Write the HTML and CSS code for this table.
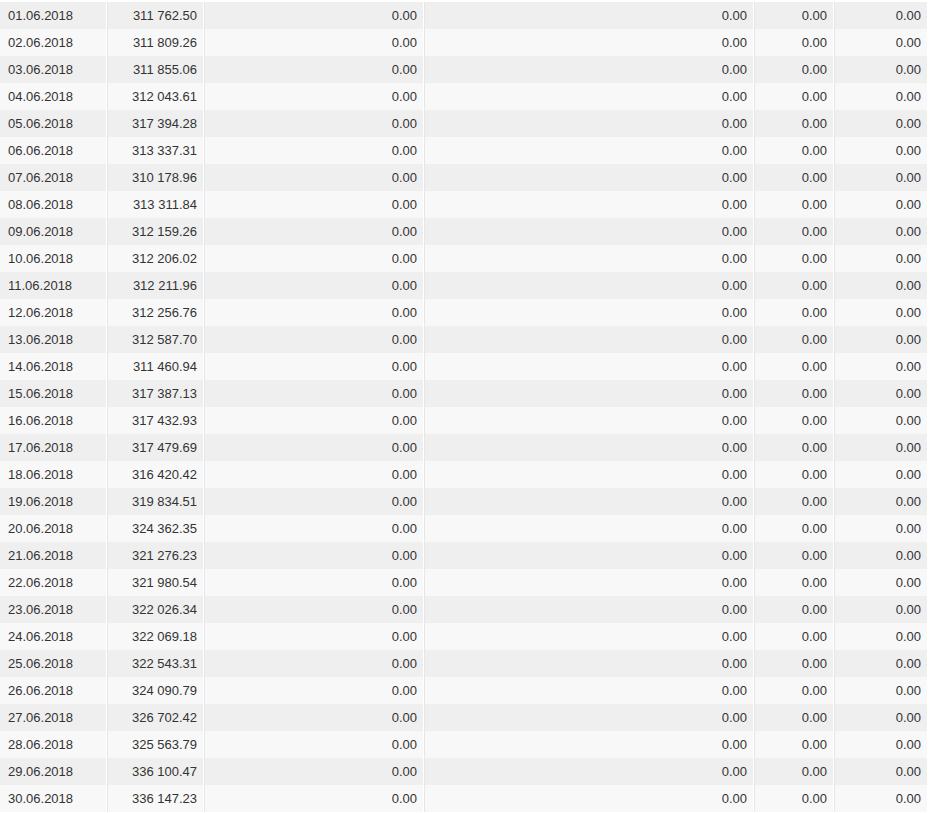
FILE: index.html
```html
<!DOCTYPE html>
<html lang="ru">
<head>
  <meta charset="UTF-8">
  <title>Отчёт за июнь 2018</title>
  <link rel="stylesheet" href="styles.css">
</head>
<body>

<table class="report">
  <colgroup>
    <col class="c-date">
    <col class="c-sum">
    <col class="c-a">
    <col class="c-b">
    <col class="c-c">
    <col class="c-d">
  </colgroup>
  <tbody>
    <tr><td class="date">01.06.2018</td><td>311 762.50</td><td>0.00</td><td>0.00</td><td>0.00</td><td>0.00</td></tr>
    <tr><td class="date">02.06.2018</td><td>311 809.26</td><td>0.00</td><td>0.00</td><td>0.00</td><td>0.00</td></tr>
    <tr><td class="date">03.06.2018</td><td>311 855.06</td><td>0.00</td><td>0.00</td><td>0.00</td><td>0.00</td></tr>
    <tr><td class="date">04.06.2018</td><td>312 043.61</td><td>0.00</td><td>0.00</td><td>0.00</td><td>0.00</td></tr>
    <tr><td class="date">05.06.2018</td><td>317 394.28</td><td>0.00</td><td>0.00</td><td>0.00</td><td>0.00</td></tr>
    <tr><td class="date">06.06.2018</td><td>313 337.31</td><td>0.00</td><td>0.00</td><td>0.00</td><td>0.00</td></tr>
    <tr><td class="date">07.06.2018</td><td>310 178.96</td><td>0.00</td><td>0.00</td><td>0.00</td><td>0.00</td></tr>
    <tr><td class="date">08.06.2018</td><td>313 311.84</td><td>0.00</td><td>0.00</td><td>0.00</td><td>0.00</td></tr>
    <tr><td class="date">09.06.2018</td><td>312 159.26</td><td>0.00</td><td>0.00</td><td>0.00</td><td>0.00</td></tr>
    <tr><td class="date">10.06.2018</td><td>312 206.02</td><td>0.00</td><td>0.00</td><td>0.00</td><td>0.00</td></tr>
    <tr><td class="date">11.06.2018</td><td>312 211.96</td><td>0.00</td><td>0.00</td><td>0.00</td><td>0.00</td></tr>
    <tr><td class="date">12.06.2018</td><td>312 256.76</td><td>0.00</td><td>0.00</td><td>0.00</td><td>0.00</td></tr>
    <tr><td class="date">13.06.2018</td><td>312 587.70</td><td>0.00</td><td>0.00</td><td>0.00</td><td>0.00</td></tr>
    <tr><td class="date">14.06.2018</td><td>311 460.94</td><td>0.00</td><td>0.00</td><td>0.00</td><td>0.00</td></tr>
    <tr><td class="date">15.06.2018</td><td>317 387.13</td><td>0.00</td><td>0.00</td><td>0.00</td><td>0.00</td></tr>
    <tr><td class="date">16.06.2018</td><td>317 432.93</td><td>0.00</td><td>0.00</td><td>0.00</td><td>0.00</td></tr>
    <tr><td class="date">17.06.2018</td><td>317 479.69</td><td>0.00</td><td>0.00</td><td>0.00</td><td>0.00</td></tr>
    <tr><td class="date">18.06.2018</td><td>316 420.42</td><td>0.00</td><td>0.00</td><td>0.00</td><td>0.00</td></tr>
    <tr><td class="date">19.06.2018</td><td>319 834.51</td><td>0.00</td><td>0.00</td><td>0.00</td><td>0.00</td></tr>
    <tr><td class="date">20.06.2018</td><td>324 362.35</td><td>0.00</td><td>0.00</td><td>0.00</td><td>0.00</td></tr>
    <tr><td class="date">21.06.2018</td><td>321 276.23</td><td>0.00</td><td>0.00</td><td>0.00</td><td>0.00</td></tr>
    <tr><td class="date">22.06.2018</td><td>321 980.54</td><td>0.00</td><td>0.00</td><td>0.00</td><td>0.00</td></tr>
    <tr><td class="date">23.06.2018</td><td>322 026.34</td><td>0.00</td><td>0.00</td><td>0.00</td><td>0.00</td></tr>
    <tr><td class="date">24.06.2018</td><td>322 069.18</td><td>0.00</td><td>0.00</td><td>0.00</td><td>0.00</td></tr>
    <tr><td class="date">25.06.2018</td><td>322 543.31</td><td>0.00</td><td>0.00</td><td>0.00</td><td>0.00</td></tr>
    <tr><td class="date">26.06.2018</td><td>324 090.79</td><td>0.00</td><td>0.00</td><td>0.00</td><td>0.00</td></tr>
    <tr><td class="date">27.06.2018</td><td>326 702.42</td><td>0.00</td><td>0.00</td><td>0.00</td><td>0.00</td></tr>
    <tr><td class="date">28.06.2018</td><td>325 563.79</td><td>0.00</td><td>0.00</td><td>0.00</td><td>0.00</td></tr>
    <tr><td class="date">29.06.2018</td><td>336 100.47</td><td>0.00</td><td>0.00</td><td>0.00</td><td>0.00</td></tr>
    <tr><td class="date">30.06.2018</td><td>336 147.23</td><td>0.00</td><td>0.00</td><td>0.00</td><td>0.00</td></tr>
  </tbody>
</table>

</body>
</html>
```

FILE: styles.css
```css
* { margin: 0; padding: 0; box-sizing: border-box; }
body {
  background: #fff;
  color: #333;
  font-family: 'Liberation Sans', Arial, sans-serif;
  font-size: 13px;
}

/* table with light gaps between columns */
.report {
  margin: 2px 0 0 -2px;
  border-collapse: separate;
  border-spacing: 2px 0;
  table-layout: fixed;
  width: 931px;
}
.c-date { width: 106px; }
.c-sum { width: 95px; }
.c-a { width: 218px; }
.c-b { width: 328px; }
.c-c { width: 78px; }
.c-d { width: 92px; }

.report td {
  height: 27px;
  padding: 0 6px 0 8px;
  text-align: right;
  vertical-align: middle;
  white-space: nowrap;
}
.report td + td { box-shadow: -1px 0 0 #e6e6e6; }
.report td.date { text-align: left; }

.report tr:nth-child(odd) td { background: #efefef; }
.report tr:nth-child(even) td { background: #f8f8f8; }
```
